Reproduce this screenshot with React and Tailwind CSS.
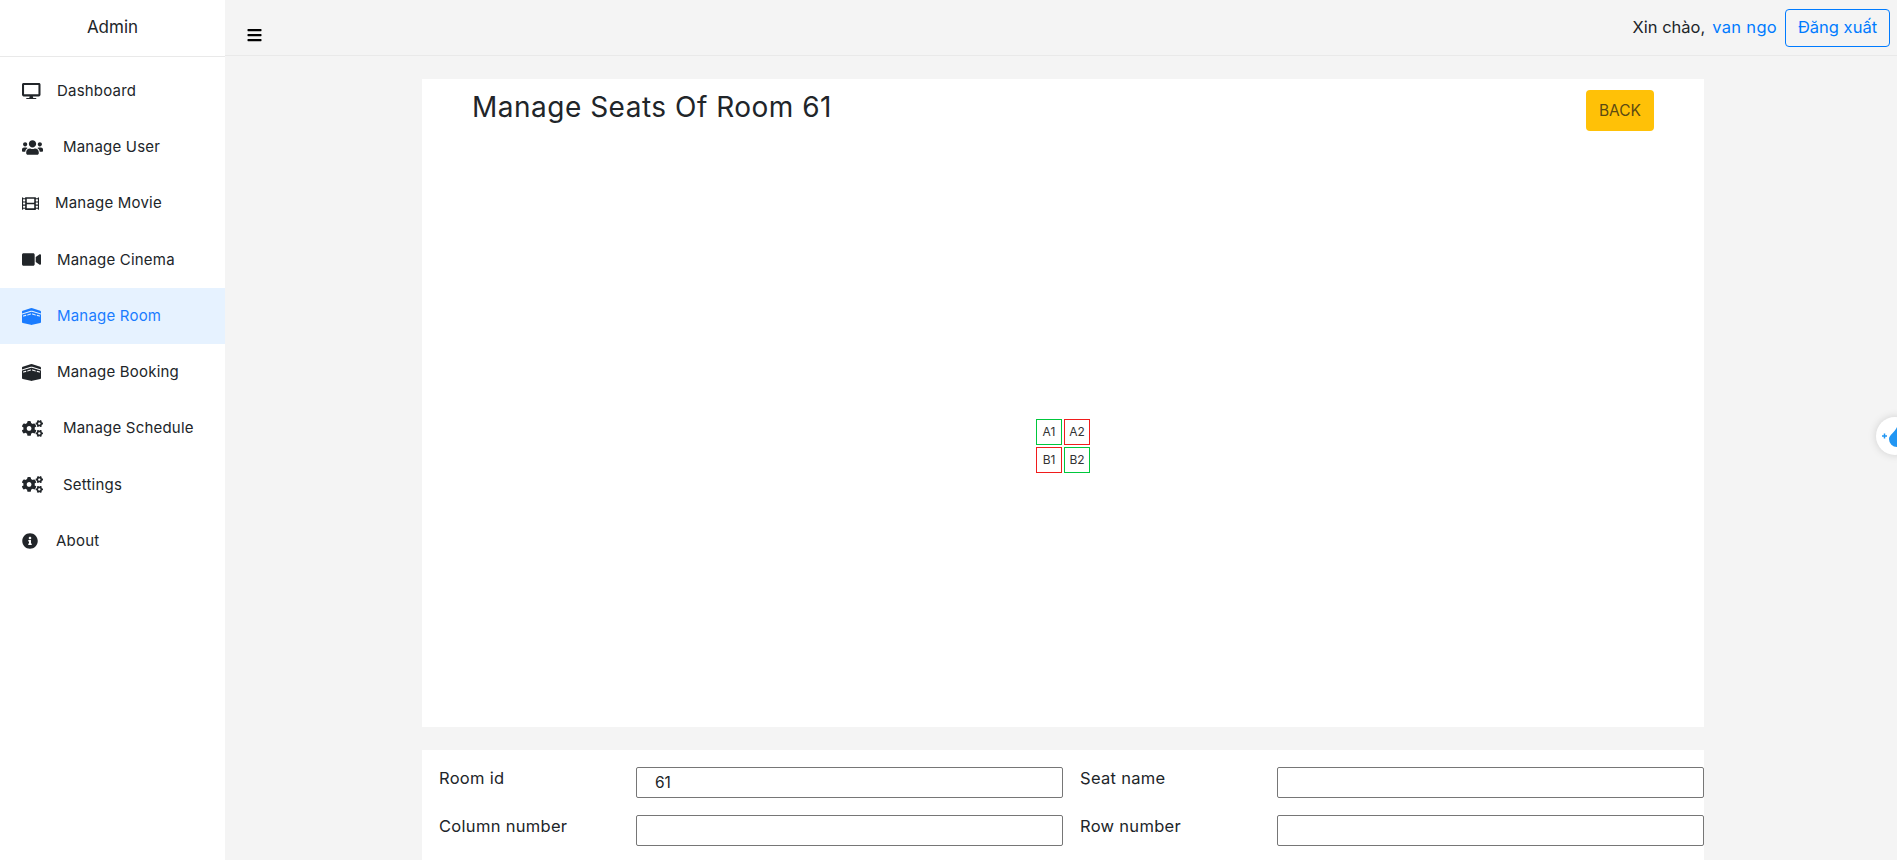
import React from 'react';
import { FaBars, FaCogs, FaDesktop, FaFilm, FaInfoCircle, FaKaaba, FaUsers, FaVideo } from 'react-icons/fa';

const navItems = [
  { label: 'Dashboard', icon: FaDesktop, iconSize: 'h-[16.5px] w-[18.5px]', gap: 'ml-[16.5px]' },
  { label: 'Manage User', icon: FaUsers, iconSize: 'h-[17px] w-[21px]', gap: 'ml-[20px]' },
  { label: 'Manage Movie', icon: FaFilm, iconSize: 'h-[17px] w-[17px]', gap: 'ml-[16px]' },
  { label: 'Manage Cinema', icon: FaVideo, iconSize: 'h-[17px] w-[19px]', gap: 'ml-[16px]' },
  { label: 'Manage Room', icon: FaKaaba, iconSize: 'h-[17px] w-[19px]', gap: 'ml-[16px]', active: true },
  { label: 'Manage Booking', icon: FaKaaba, iconSize: 'h-[17px] w-[19px]', gap: 'ml-[16px]' },
  { label: 'Manage Schedule', icon: FaCogs, iconSize: 'h-[17px] w-[21px]', gap: 'ml-[20px]' },
  { label: 'Settings', icon: FaCogs, iconSize: 'h-[17px] w-[21px]', gap: 'ml-[20px]' },
  { label: 'About', icon: FaInfoCircle, iconSize: 'h-4 w-4', gap: 'ml-[18px]' },
];

const seats = [
  { name: 'A1', free: true },
  { name: 'A2', free: false },
  { name: 'B1', free: false },
  { name: 'B2', free: true },
];

function Field({ label, value }) {
  return (
    <div className="flex">
      <label className="-mt-px w-[197px] shrink-0 text-[16.5px] leading-[24px] tracking-[0.3px] text-[#212529]">{label}</label>
      <input
        readOnly
        value={value || ''}
        className="h-[31px] w-[427px] rounded-[2px] border border-[#767676] bg-white px-[18px] text-[15.5px] text-[#212529]"
      />
    </div>
  );
}

export default function App() {
  return (
    <div className="flex h-screen overflow-hidden bg-[#f4f4f4] font-['Inter',sans-serif] text-[#212529]">
      <aside className="w-[225px] shrink-0 bg-white">
        <div className="flex h-[57px] items-center justify-center border-b border-[#e9e9e9] text-[17px]">Admin</div>
        <nav className="pt-[6px]">
          {navItems.map((item) => {
            const Icon = item.icon;
            return (
              <div
                key={item.label}
                className={`flex h-[56.25px] items-center pl-[22px] text-[15px] tracking-[0.2px] ${item.active ? 'bg-[#e6f2ff] text-[#1a7cff]' : ''}`}
              >
                <Icon className={`shrink-0 ${item.iconSize}`} />
                <span className={item.gap}>{item.label}</span>
              </div>
            );
          })}
        </nav>
      </aside>

      <div className="min-w-0 flex-1">
        <header className="flex h-[56px] items-center justify-between border-b border-[#e9e9e9] pl-[22px] pr-[7px]">
          <FaBars className="mt-[14px] h-[16px] w-[15px] text-black" />
          <div className="flex items-center text-[16.5px]">
            <span>Xin chào,</span>
            <span className="ml-[7px] tracking-[0.3px] text-[#007bff]">van ngo</span>
            <button className="ml-[8px] h-[38px] w-[105px] rounded-[4px] border border-[#007bff] text-[#007bff]">Đăng xuất</button>
          </div>
        </header>

        <main className="ml-[197px] w-[1282px] pt-[23px]">
          <section className="h-[648px] bg-white">
            <div className="flex h-[86px] items-start justify-between pl-[50px] pr-[50px]">
              <h1 className="pt-[8px] text-[28px] font-normal leading-[41px] tracking-[0.5px]">Manage Seats Of Room 61</h1>
              <button className="mt-[11px] h-[41px] w-[68px] rounded-[4px] bg-[#ffc107] text-[15.5px] text-[#5c4a12]">BACK</button>
            </div>
            <div className="flex h-[562px] items-center justify-center">
              <div className="grid grid-cols-[26px_26px] gap-[2px]">
                {seats.map((seat) => (
                  <div
                    key={seat.name}
                    className={`flex h-[26px] w-[26px] items-center justify-center border text-[12px] text-[#333] ${seat.free ? 'border-[#00c73c]' : 'border-[#f01c1c]'}`}
                  >
                    {seat.name}
                  </div>
                ))}
              </div>
            </div>
          </section>

          <section className="mt-[23px] h-[200px] bg-white pl-[17px] pt-[17px]">
            <div className="grid grid-cols-2 gap-x-[17px] gap-y-[17px]">
              <Field label="Room id" value="61" />
              <Field label="Seat name" />
              <Field label="Column number" />
              <Field label="Row number" />
            </div>
          </section>
        </main>
      </div>

      {/* floating extension bubble, cut off by the window edge */}
      <div className="fixed left-[1876px] top-[417px] flex h-[38px] w-[38px] items-center rounded-full bg-white pl-[6px] shadow-[0_0_8px_rgba(0,0,0,0.15)]">
        <svg width="32" height="22" viewBox="0 0 32 22" className="shrink-0">
          <path d="M0 11h5M2.5 8.5v5" stroke="#2196f3" strokeWidth="1.5" />
          <path d="M15 2c2 5 8 8 8 12a8 8 0 0 1-16 0c0-4 6-7 8-12z" fill="#2196f3" />
        </svg>
      </div>
    </div>
  );
}
